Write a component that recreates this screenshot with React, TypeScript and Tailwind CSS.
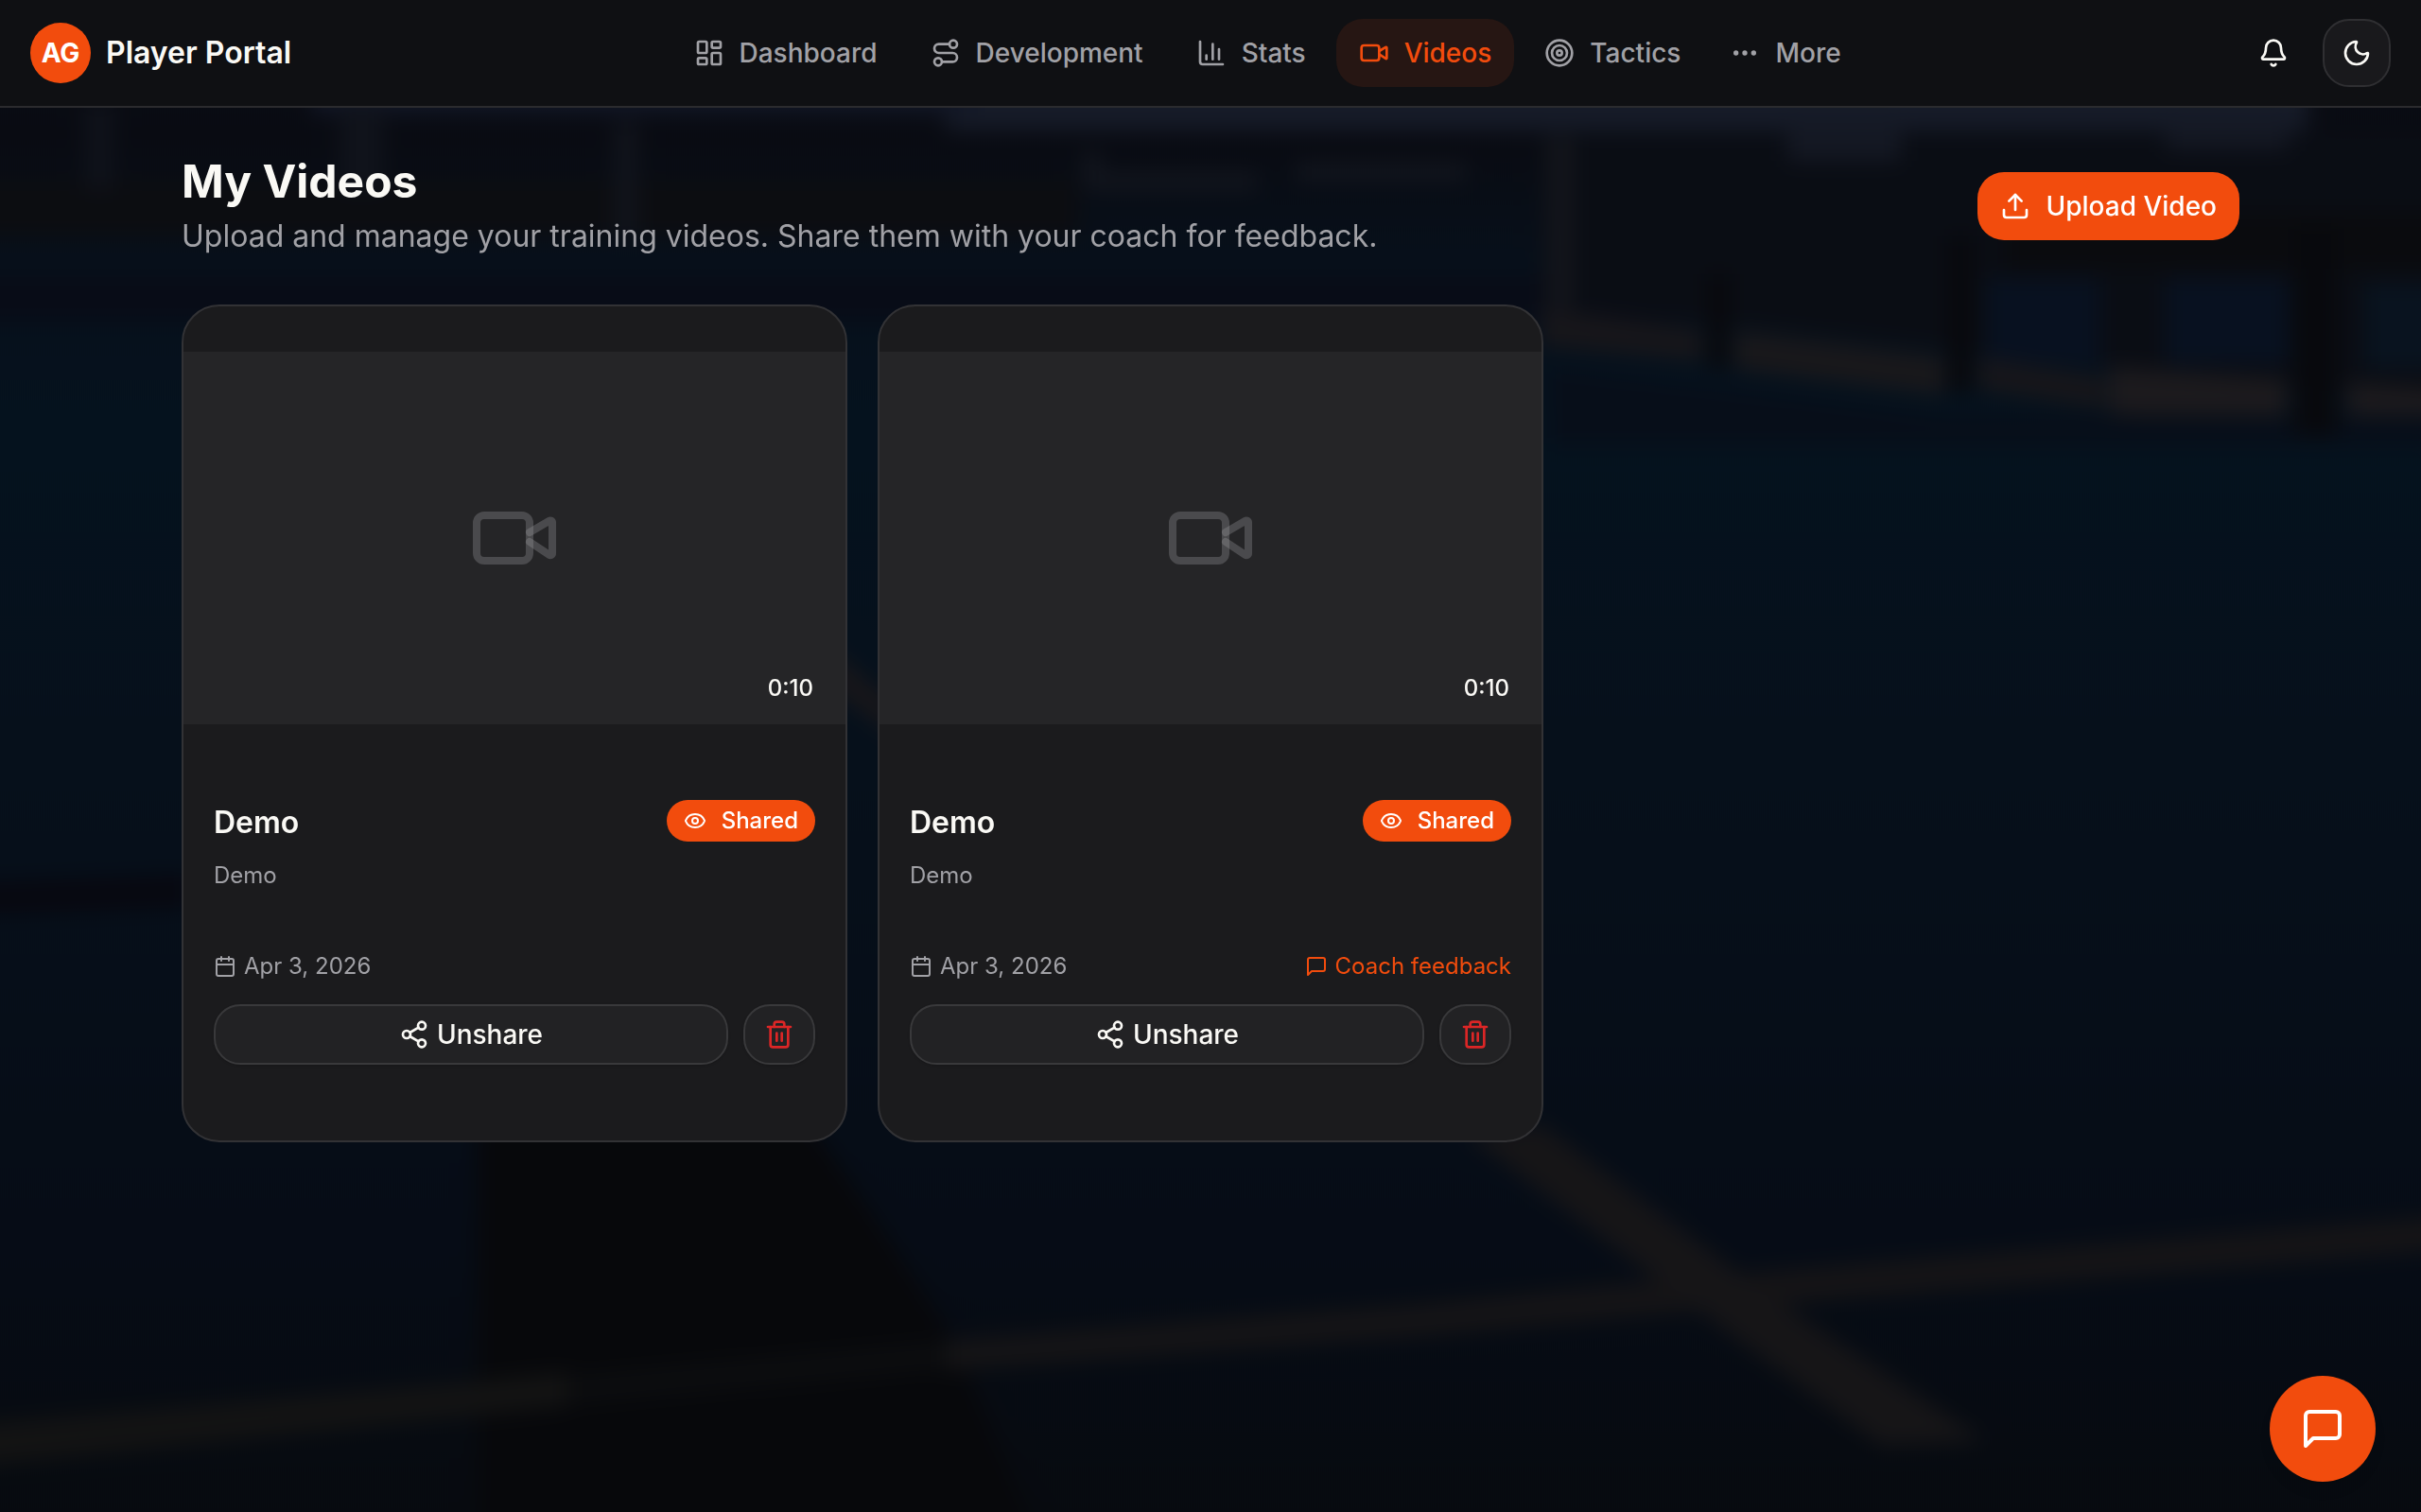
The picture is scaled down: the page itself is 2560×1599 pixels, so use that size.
import {
  Bell,
  Calendar,
  Ellipsis,
  Eye,
  LayoutDashboard,
  Moon,
  Route,
  Share2,
  Target,
  Trash2,
  Upload,
  Video,
  type LucideIcon,
} from "lucide-react";

type NavItem = { label: string; icon: LucideIcon | typeof ChartIcon; active?: boolean };

type VideoEntry = {
  id: number;
  title: string;
  description: string;
  date: string;
  duration: string;
  hasFeedback: boolean;
};

const videos: VideoEntry[] = [
  { id: 1, title: "Demo", description: "Demo", date: "Apr 3, 2026", duration: "0:10", hasFeedback: false },
  { id: 2, title: "Demo", description: "Demo", date: "Apr 3, 2026", duration: "0:10", hasFeedback: true },
];

function ChartIcon({ className }: { className?: string }) {
  return (
    <svg
      viewBox="0 0 24 24"
      fill="none"
      stroke="currentColor"
      strokeWidth="2"
      strokeLinecap="round"
      strokeLinejoin="round"
      aria-hidden="true"
      className={className}
    >
      <path d="M3 3v16a2 2 0 0 0 2 2h16" />
      <path d="M8 17v-3" />
      <path d="M13 17V5" />
      <path d="M18 17V9" />
    </svg>
  );
}

function MessageIcon({ className }: { className?: string }) {
  return (
    <svg
      viewBox="0 0 24 24"
      fill="none"
      stroke="currentColor"
      strokeWidth="2"
      strokeLinecap="round"
      strokeLinejoin="round"
      aria-hidden="true"
      className={className}
    >
      <path d="M21 15a2 2 0 0 1-2 2H7l-4 4V5a2 2 0 0 1 2-2h14a2 2 0 0 1 2 2z" />
    </svg>
  );
}

const navItems: NavItem[] = [
  { label: "Dashboard", icon: LayoutDashboard },
  { label: "Development", icon: Route },
  { label: "Stats", icon: ChartIcon },
  { label: "Videos", icon: Video, active: true },
  { label: "Tactics", icon: Target },
];

// Dimmed, out-of-focus court behind the whole page
function CourtBackdrop() {
  return (
    <svg
      viewBox="0 0 2560 1600"
      preserveAspectRatio="none"
      aria-hidden="true"
      className="pointer-events-none fixed inset-0 -z-10 h-full w-full"
    >
      <defs>
        <linearGradient id="court" x1="0" y1="0" x2="0" y2="1">
          <stop offset="0" stopColor="#0b0e17" />
          <stop offset="0.12" stopColor="#090b12" />
          <stop offset="0.2" stopColor="#07101b" />
          <stop offset="0.3" stopColor="#05121e" />
          <stop offset="0.5" stopColor="#06101b" />
          <stop offset="0.8" stopColor="#060c16" />
          <stop offset="1" stopColor="#070a0e" />
        </linearGradient>
        <filter
          id="soft"
          filterUnits="userSpaceOnUse"
          x="0"
          y="0"
          width="2560"
          height="1600"
          colorInterpolationFilters="sRGB"
        >
          <feGaussianBlur stdDeviation="11" />
        </filter>
      </defs>
      <rect width="2560" height="1600" fill="url(#court)" />
      <g filter="url(#soft)">
        <rect x="-60" y="-60" width="2680" height="1720" fill="url(#court)" />

        {/* hall, glass and posts */}
        <rect x="1000" y="90" width="1440" height="48" fill="#161b28" />
        <rect x="330" y="90" width="700" height="30" fill="#121726" />
        <rect x="-60" y="190" width="1200" height="60" fill="#0c0d11" />
        <rect x="-60" y="290" width="2000" height="50" fill="#080c17" />
        <rect x="90" y="110" width="30" height="90" fill="#0f121a" />
        <rect x="360" y="110" width="45" height="90" fill="#10131b" />
        <rect x="650" y="130" width="24" height="120" fill="#11141c" />
        <rect x="1145" y="160" width="20" height="40" fill="#12151d" />
        <rect x="1150" y="182" width="180" height="20" fill="#12151d" />
        <rect x="1370" y="172" width="180" height="20" fill="#12151d" />
        <path d="M1630 140H2620V430L1630 320Z" fill="#0a0d14" />
        <rect x="1636" y="145" width="28" height="180" fill="#13151b" />
        <rect x="1890" y="130" width="120" height="40" fill="#141823" />
        <rect x="2290" y="130" width="130" height="28" fill="#141823" />
        <rect x="2120" y="225" width="500" height="60" fill="#0a0b0e" />
        <rect x="2100" y="295" width="120" height="90" fill="#081120" />
        <rect x="2290" y="295" width="130" height="90" fill="#081120" />
        <rect x="2500" y="300" width="120" height="90" fill="#09131f" />

        {/* kerb */}
        <path d="M1630 325L1800 350V382L1630 366Z" fill="#17161a" />
        <path d="M1834 350L2056 378V418L1834 390Z" fill="#19181b" />
        <path d="M2092 378L2226 400V432L2092 412Z" fill="#17161a" />
        <path d="M2230 388L2418 402V450L2230 438Z" fill="#1c1a1d" />
        <path d="M2482 405L2620 415V480L2482 455Z" fill="#1c1a1d" />
        <path d="M1640 392L2056 440H2620V470H1640Z" fill="#070e19" />
        <rect x="1806" y="290" width="22" height="100" fill="#08090d" />
        <rect x="2060" y="250" width="26" height="165" fill="#08090d" />
        <rect x="2426" y="240" width="46" height="220" fill="#08090d" />

        {/* figure shadow */}
        <path d="M505 1150H830L920 1280L1010 1420L1110 1660H505Z" fill="#07080b" />
        <path d="M-60 935L200 925V960L-60 970Z" fill="#070810" />
        <path d="M860 670L1000 790L960 790L850 710Z" fill="#17161a" />

        {/* court lines */}
        <path d="M-60 1510L500 1462L600 1452V1488L500 1498L-60 1555Z" fill="#131313" />
        <path d="M600 1456L1000 1420V1448L600 1486Z" fill="#0c0d0f" />
        <path d="M1000 1418L1500 1380L1830 1348L2620 1284V1320L1830 1384L1500 1414L1000 1450Z" fill="#151416" />
        <path d="M1550 1200L1630 1190L1870 1370L2100 1525L1990 1530L1780 1375Z" fill="#161517" />
      </g>
    </svg>
  );
}

function Header() {
  return (
    <header className="flex items-center justify-between border-b-2 border-[#2b2b2e] bg-[#0f1013] px-8 py-5">
      <a href="#" className="flex items-center gap-4">
        <span className="flex size-16 items-center justify-center rounded-full bg-[#f24c0d] text-[28px] font-bold text-white">
          AG
        </span>
        <span className="text-[32px] leading-[48px] font-semibold">Player Portal</span>
      </a>

      <nav aria-label="Main" className="flex items-center gap-2 text-[28px] leading-10 font-medium">
        {navItems.map(({ label, icon: Icon, active }) => (
          <a
            key={label}
            href="#"
            aria-current={active ? "page" : undefined}
            className={
              active
                ? "flex h-18 items-center gap-4 rounded-[28px] bg-[#261613] px-6 text-[#f24c0d]"
                : "flex h-18 items-center gap-4 rounded-[28px] px-6 text-[#a1a1a6]"
            }
          >
            <Icon className="size-8" />
            {label}
          </a>
        ))}
        <button type="button" className="flex h-18 items-center gap-4 rounded-[28px] px-5 text-[#a1a1a6]">
          <Ellipsis className="size-8" />
          More
        </button>
      </nav>

      <div className="flex items-center gap-4">
        <button type="button" aria-label="Notifications" className="flex size-18 items-center justify-center">
          <Bell className="size-8" />
        </button>
        <button
          type="button"
          aria-label="Toggle theme"
          className="flex size-18 items-center justify-center rounded-[28px] border-2 border-[#2f2f32] bg-[#19191c]"
        >
          <Moon className="size-8" />
        </button>
      </div>
    </header>
  );
}

function VideoCard({ video }: { video: VideoEntry }) {
  return (
    <article className="overflow-hidden rounded-[40px] border-2 border-[#323235] bg-[#1b1b1d] pt-12 pb-20">
      <div className="relative flex aspect-video items-center justify-center bg-[#252527]">
        <Video className="size-24 text-[#a1a1a6]/30" />
        <span className="absolute right-4 bottom-4 px-[18px] py-1 text-2xl leading-9 font-medium">
          {video.duration}
        </span>
      </div>

      <div className="px-8 pt-20">
        <div className="flex items-start justify-between">
          <h2 className="text-[32px] leading-[48px] font-semibold">{video.title}</h2>
          <span className="flex h-11 items-center gap-4 rounded-full bg-[#f24c0d] px-[18px] text-2xl leading-8 font-medium text-white">
            <Eye className="size-6" />
            Shared
          </span>
        </div>
        <p className="mt-4 text-2xl leading-8 text-[#a1a1a6]">{video.description}</p>

        <div className="mt-16 flex items-center justify-between text-2xl leading-8 text-[#a1a1a6]">
          <span className="flex items-center gap-2">
            <Calendar className="size-6" />
            {video.date}
          </span>
          {video.hasFeedback && (
            <span className="flex items-center gap-2 text-[#f24c0d]">
              <MessageIcon className="size-6" />
              Coach feedback
            </span>
          )}
        </div>

        <div className="mt-6 flex gap-4">
          <button
            type="button"
            className="flex h-16 flex-1 items-center justify-center gap-2 rounded-[28px] border-2 border-[#39393b] bg-[#222224] text-[28px] leading-10 font-medium shadow-sm"
          >
            <Share2 className="size-8" />
            Unshare
          </button>
          <button
            type="button"
            aria-label="Delete video"
            className="flex h-16 w-19 items-center justify-center rounded-[28px] border-2 border-[#39393b] bg-[#222224] text-[#dc2626] shadow-sm"
          >
            <Trash2 className="size-8" />
          </button>
        </div>
      </div>
    </article>
  );
}

export default function App() {
  return (
    <div className="relative isolate min-h-screen bg-[#07090f] font-['Inter',sans-serif] text-[#faf9f5]">
      <CourtBackdrop />
      <Header />

      <main className="mx-auto max-w-[2304px] px-16 py-12">
        <div className="flex items-center justify-between">
          <div>
            <h1 className="text-5xl leading-[60px] font-bold">My Videos</h1>
            <p className="mt-1 text-[32px] leading-[48px] text-[#a1a1a6]">
              Upload and manage your training videos. Share them with your coach for feedback.
            </p>
          </div>
          <button
            type="button"
            className="flex h-18 items-center gap-4 rounded-[28px] bg-[#f24c0d] px-6 text-[28px] leading-10 font-medium text-white"
          >
            <Upload className="size-8" />
            Upload Video
          </button>
        </div>

        <div className="mt-12 grid grid-cols-3 gap-8">
          {videos.map((video) => (
            <VideoCard key={video.id} video={video} />
          ))}
        </div>
      </main>

      <button
        type="button"
        aria-label="Open chat"
        className="fixed right-12 bottom-8 flex size-28 items-center justify-center rounded-full bg-[#f24c0d] text-white shadow-lg"
      >
        <MessageIcon className="size-12" />
      </button>
    </div>
  );
}
